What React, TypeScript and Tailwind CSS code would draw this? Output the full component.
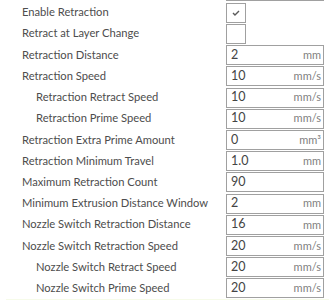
import React from 'react';

interface Setting {
  label: string;
  indent?: boolean;
  kind: 'check' | 'number';
  checked?: boolean;
  value?: string;
  unit?: string;
}

const settings: Setting[] = [
  { label: 'Enable Retraction', kind: 'check', checked: true },
  { label: 'Retract at Layer Change', kind: 'check', checked: false },
  { label: 'Retraction Distance', kind: 'number', value: '2', unit: 'mm' },
  { label: 'Retraction Speed', kind: 'number', value: '10', unit: 'mm/s' },
  { label: 'Retraction Retract Speed', indent: true, kind: 'number', value: '10', unit: 'mm/s' },
  { label: 'Retraction Prime Speed', indent: true, kind: 'number', value: '10', unit: 'mm/s' },
  { label: 'Retraction Extra Prime Amount', kind: 'number', value: '0', unit: 'mm³' },
  { label: 'Retraction Minimum Travel', kind: 'number', value: '1.0', unit: 'mm' },
  { label: 'Maximum Retraction Count', kind: 'number', value: '90' },
  { label: 'Minimum Extrusion Distance Window', kind: 'number', value: '2', unit: 'mm' },
  { label: 'Nozzle Switch Retraction Distance', kind: 'number', value: '16', unit: 'mm' },
  { label: 'Nozzle Switch Retraction Speed', kind: 'number', value: '20', unit: 'mm/s' },
  { label: 'Nozzle Switch Retract Speed', indent: true, kind: 'number', value: '20', unit: 'mm/s' },
  { label: 'Nozzle Switch Prime Speed', indent: true, kind: 'number', value: '20', unit: 'mm/s' },
];

const SettingRow: React.FC<{ setting: Setting }> = ({ setting }) => {
  return (
    <div className="flex items-center h-[21.23px]">
      <div
        className={`flex-1 truncate text-[11.2px] text-[#4d4d4d] ${setting.indent ? 'pl-[36px]' : 'pl-[22px]'}`}
      >
        {setting.label}
      </div>
      <div className="w-[98px] mr-[5px] h-full flex items-center">
        {setting.kind === 'check' ? (
          <div className="w-[20px] h-[20px] border border-[#a0a0a0] flex items-center justify-center bg-white">
            {setting.checked && (
              <svg width="8" height="6" viewBox="0 0 8 6">
                <path d="M1 3 L3 5 L7 1" fill="none" stroke="#5a5a5a" strokeWidth="1.4" />
              </svg>
            )}
          </div>
        ) : (
          <div className="w-full h-[20px] border border-[#a0a0a0] flex items-center justify-between pl-[4px] pr-[2px] bg-white">
            <span className="text-[12.5px] text-[#444]">{setting.value}</span>
            {setting.unit && <span className="text-[11px] text-[#808080]">{setting.unit}</span>}
          </div>
        )}
      </div>
    </div>
  );
};

export default function App() {
  return (
    <div className="w-[329px] h-[300px] overflow-hidden bg-white font-['Lato','Liberation_Sans',sans-serif]">
      <div className="flex -mt-[19.2px] h-[21.23px] items-center">
        <div className="flex-1" />
        <div className="w-[98px] mr-[5px] h-[20px] border border-[#a0a0a0]" />
      </div>
      {settings.map((s) => (
        <SettingRow key={s.label} setting={s} />
      ))}
      <div className="ml-[6px] h-[10px] bg-[#f6fbe9]" />
    </div>
  );
}
